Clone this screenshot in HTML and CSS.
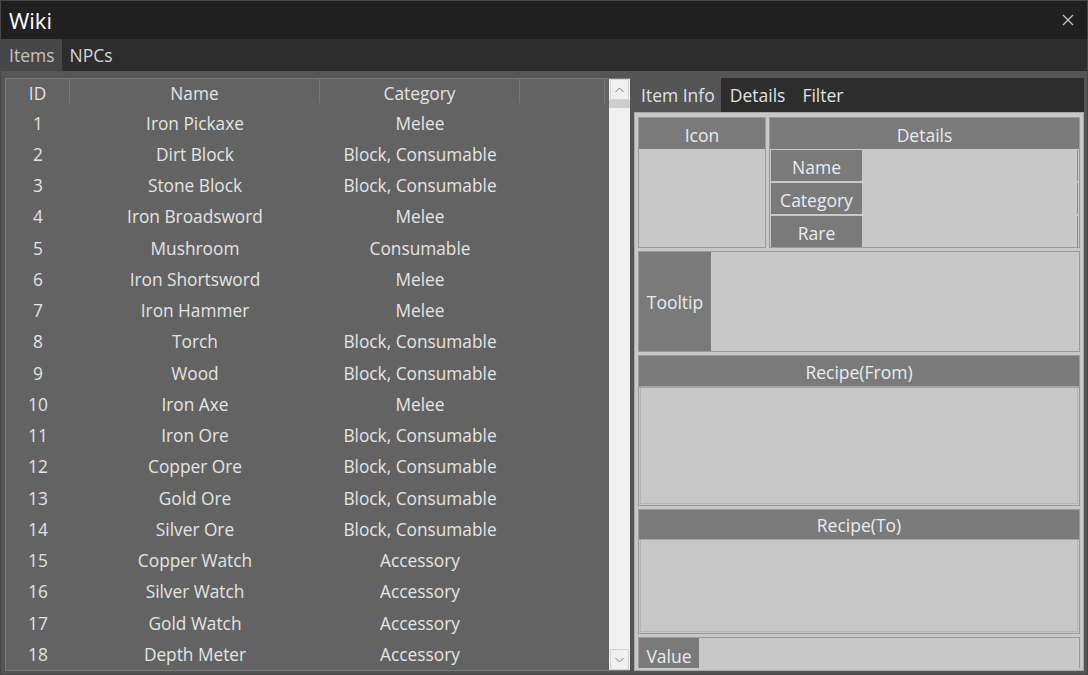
FILE: index.html
```html
<!DOCTYPE html>
<html>
<head>
<meta charset="utf-8">
<link rel="stylesheet" href="styles.css">
</head>
<body>
<div class="window">
  <div class="titlebar">
    <span class="title">Wiki</span>
    <svg class="close" width="12" height="12" viewBox="0 0 12 12"><path d="M1 1L11 11M11 1L1 11" stroke="#c8c8c8" stroke-width="1.2" fill="none"/></svg>
  </div>
  <div class="tabs">
    <div class="tab active">Items</div>
    <div class="tab">NPCs</div>
  </div>
  <div class="main">
    <div class="grid">
      <div class="table">
        <div class="hrow">
          <div class="c id">ID</div>
          <div class="c name">Name</div>
          <div class="c cat">Category</div>
          <div class="c rest"></div>
        </div>
        <div class="row"><div class="c id">1</div><div class="c name">Iron Pickaxe</div><div class="c cat">Melee</div></div>
        <div class="row"><div class="c id">2</div><div class="c name">Dirt Block</div><div class="c cat">Block, Consumable</div></div>
        <div class="row"><div class="c id">3</div><div class="c name">Stone Block</div><div class="c cat">Block, Consumable</div></div>
        <div class="row"><div class="c id">4</div><div class="c name">Iron Broadsword</div><div class="c cat">Melee</div></div>
        <div class="row"><div class="c id">5</div><div class="c name">Mushroom</div><div class="c cat">Consumable</div></div>
        <div class="row"><div class="c id">6</div><div class="c name">Iron Shortsword</div><div class="c cat">Melee</div></div>
        <div class="row"><div class="c id">7</div><div class="c name">Iron Hammer</div><div class="c cat">Melee</div></div>
        <div class="row"><div class="c id">8</div><div class="c name">Torch</div><div class="c cat">Block, Consumable</div></div>
        <div class="row"><div class="c id">9</div><div class="c name">Wood</div><div class="c cat">Block, Consumable</div></div>
        <div class="row"><div class="c id">10</div><div class="c name">Iron Axe</div><div class="c cat">Melee</div></div>
        <div class="row"><div class="c id">11</div><div class="c name">Iron Ore</div><div class="c cat">Block, Consumable</div></div>
        <div class="row"><div class="c id">12</div><div class="c name">Copper Ore</div><div class="c cat">Block, Consumable</div></div>
        <div class="row"><div class="c id">13</div><div class="c name">Gold Ore</div><div class="c cat">Block, Consumable</div></div>
        <div class="row"><div class="c id">14</div><div class="c name">Silver Ore</div><div class="c cat">Block, Consumable</div></div>
        <div class="row"><div class="c id">15</div><div class="c name">Copper Watch</div><div class="c cat">Accessory</div></div>
        <div class="row"><div class="c id">16</div><div class="c name">Silver Watch</div><div class="c cat">Accessory</div></div>
        <div class="row"><div class="c id">17</div><div class="c name">Gold Watch</div><div class="c cat">Accessory</div></div>
        <div class="row"><div class="c id">18</div><div class="c name">Depth Meter</div><div class="c cat">Accessory</div></div>
      </div>
      <div class="scrollbar">
        <div class="sbtn"><svg width="9" height="6" viewBox="0 0 9 6"><path d="M0.5 5L4.5 1L8.5 5" stroke="#7a7a7a" stroke-width="1" fill="none"/></svg></div>
        <div class="thumb"></div>
        <div class="track"></div>
        <div class="sbtn"><svg width="9" height="6" viewBox="0 0 9 6"><path d="M0.5 1L4.5 5L8.5 1" stroke="#7a7a7a" stroke-width="1" fill="none"/></svg></div>
      </div>
    </div>
    <div class="side">
      <div class="stabs">
        <div class="stab active">Item Info</div>
        <div class="stab">Details</div>
        <div class="stab">Filter</div>
      </div>
      <div class="content">
        <div class="toprow">
          <div class="box iconbox">
            <div class="head">Icon</div>
            <div class="body"></div>
          </div>
          <div class="box detbox">
            <div class="head">Details</div>
            <div class="drows">
              <div class="drow"><div class="dlabel">Name</div><div class="dval"></div></div>
              <div class="drow"><div class="dlabel">Category</div><div class="dval"></div></div>
              <div class="drow"><div class="dlabel">Rare</div><div class="dval"></div></div>
            </div>
          </div>
        </div>
        <div class="box tipbox">
          <div class="tiplabel">Tooltip</div>
          <div class="body"></div>
        </div>
        <div class="box recfrom">
          <div class="head rhead">Recipe(From)</div>
          <div class="rbody"></div>
        </div>
        <div class="box recto">
          <div class="head rhead2">Recipe(To)</div>
          <div class="rbody"></div>
        </div>
        <div class="box valbox">
          <div class="vlabel">Value</div>
        </div>
      </div>
    </div>
  </div>
</div>
</body>
</html>
```
FILE: styles.css
```css
* { box-sizing: border-box; }
html, body { margin: 0; padding: 0; }
body {
  width: 1088px; height: 675px; overflow: hidden;
  font-family: "Open Sans", "Noto Sans", sans-serif;
  background: #555555;
}
.window {
  width: 1088px; height: 675px;
  border: 1px solid #474747;
  background: #555555;
  display: flex; flex-direction: column;
}
.titlebar {
  height: 38px; flex: none;
  background: #202020;
  display: flex; align-items: center; justify-content: space-between;
  padding: 0 13px 0 8px;
}
.title { color: #ffffff; font-size: 22px; line-height: 1; margin-top: -1px; }
.close { display: block; }
.tabs {
  height: 32px; flex: none;
  background: #2d2d2d;
  display: flex;
}
.tab {
  padding: 0 7px 0 8px;
  font-size: 17.5px; line-height: 33px;
  color: #d6d6d6;
}
.tab.active { background: #474747; color: #c4c4c4; padding-right: 7px; }
.main {
  flex: 1;
  display: flex; gap: 4px;
  padding: 7px 3px 3px 4px;
}
.grid {
  width: 625px; flex: none;
  background: #636363;
  border: 1px solid #7a7a7a;
  border-right: none;
  display: flex;
}
.table { flex: 1; color: #e4e4e4; font-size: 17.3px; }
.hrow { height: 28px; display: flex; align-items: flex-start; }
.hrow .c { height: 24px; line-height: 29px; border-right: 1px solid #777777; }
.row { height: 31.25px; display: flex; align-items: center; padding-top: 1px; }
.c { text-align: center; white-space: nowrap; flex: none; }
.id { width: 64px; }
.name { width: 250px; }
.cat { width: 200px; }
.rest { width: 85px; }
.scrollbar {
  width: 21px; flex: none;
  background: #f0f0f0;
  display: flex; flex-direction: column;
  margin-left: 2px;
}
.sbtn {
  height: 21px; flex: none;
  border: 1px solid #d4d4d4;
  margin: 0 1px;
  display: flex; align-items: center; justify-content: center;
}
.thumb { height: 8px; background: #cdcdcd; flex: none; }
.track { flex: 1; }
.side {
  flex: 1;
  display: flex; flex-direction: column;
}
.stabs {
  height: 34px; flex: none;
  background: #2d2d2d;
  display: flex;
}
.stab {
  font-size: 17.5px; line-height: 35px; color: #e2e2e2;
  padding: 0 8px 0 9px;
}
.stab:nth-child(3) { padding-left: 9px; }
.stab.active { background: #555555; padding: 0 6px 0 7px; margin-right: 0; color: #dde2ea; }
.content {
  flex: 1;
  background: #c8c8c8;
  border: 1px solid #a8a8a8;
  padding: 4px 3px 2px 3px;
  display: flex; flex-direction: column; gap: 3px;
}
.box { border: 1px solid #9a9a9a; background: #c8c8c8; }
.head {
  height: 31px; flex: none;
  background: #7a7a7a;
  color: #e8ecf0;
  font-size: 17.5px; line-height: 34px; text-align: center;
}
.toprow { display: flex; gap: 3px; height: 131px; flex: none; }
.iconbox { width: 128px; flex: none; display: flex; flex-direction: column; }
.iconbox .body { flex: 1; }
.detbox { flex: 1; display: flex; flex-direction: column; }
.drows {
  flex: 1;
  display: flex; flex-direction: column; gap: 2px;
  padding: 1px 1px 0 1px;
  background: #c8c8c8;
}
.drow { flex: 1; display: flex; background: #8e8e8e; padding: 0 1px 0 0; }
.dlabel {
  width: 91px; flex: none;
  background: #7a7a7a; color: #e8ecf0;
  font-size: 17.5px; display: flex; align-items: center; justify-content: center;
  padding-top: 2px;
}
.dval { flex: 1; background: #c8c8c8; }
.tipbox { height: 101px; flex: none; display: flex; }
.tiplabel {
  width: 72px; flex: none;
  background: #7a7a7a; color: #e8ecf0;
  font-size: 17.5px; display: flex; align-items: center; justify-content: center;
}
.tipbox .body { flex: 1; }
.recfrom { height: 151px; flex: none; display: flex; flex-direction: column; }
.rhead { height: 32px; line-height: 33px; border-bottom: 2px solid #a4a4a4; }
.rhead2 { height: 30px; line-height: 31px; border-bottom: 1px solid #a4a4a4; }
.rbody { flex: 1; border: 1px solid #b4b4b4; border-top: none; margin: 0 1px 1px 1px; }
.recto { height: 125px; flex: none; display: flex; flex-direction: column; }
.valbox { flex: 1; border-bottom: none; display: flex; }
.vlabel {
  width: 60px; flex: none;
  background: #7a7a7a; color: #e8ecf0;
  font-size: 17.5px; display: flex; align-items: flex-end; justify-content: center;
  line-height: 24px;
}
```
